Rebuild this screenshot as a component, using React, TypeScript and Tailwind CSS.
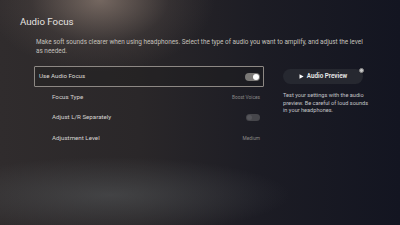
import React from "react";

function Toggle({ on }: { on: boolean }) {
  return on ? (
    <div className="w-[15px] h-[8px] rounded-full bg-[#7a7876] flex items-center justify-end pr-[1px]">
      <div className="w-[6px] h-[6px] rounded-full bg-white" />
    </div>
  ) : (
    <div className="w-[14px] h-[7px] rounded-full bg-[#46464b] flex items-center pl-[1px]">
      <div className="w-[5px] h-[5px] rounded-full bg-[#55555a]" />
    </div>
  );
}

export default function App() {
  return (
    <div
      className="relative w-[400px] h-[225px] overflow-hidden bg-[linear-gradient(90deg,#302c2d_0%,#2a2729_35%,#1c1c24_65%,#131521_100%)]"
      style={{ fontFamily: "Roboto, 'Noto Sans', sans-serif" }}
    >
      <div className="absolute inset-0 bg-[radial-gradient(ellipse_115px_72px_at_100px_0px,rgba(165,145,132,0.6),rgba(120,105,98,0.18)_60%,transparent_100%)]" />
      <div className="absolute inset-0 bg-[radial-gradient(ellipse_180px_38px_at_110px_195px,rgba(95,100,102,0.45),transparent_100%)]" />
      <div className="relative flex flex-col pl-[20px] pt-[15px]">
        <div className="text-[9.7px] leading-[14px] text-[#e6e3e0]">Audio Focus</div>
        <div className="ml-[16px] mt-[9px] w-[334px] text-[6.4px] leading-[9px] text-[#c4c0bc]">
          Make soft sounds clearer when using headphones. Select the type of audio you want to amplify, and adjust the level as needed.
        </div>
        <div className="flex mt-[10px] ml-[14px]">
          <div className="w-[230px] flex flex-col">
            <div className="h-[21px] border border-[#8d8884] rounded-[1px] flex items-center justify-between pl-[4px] pr-[3px] bg-[rgba(30,28,30,0.35)]">
              <span className="text-[6.2px] text-[#dedbd8]">Use Audio Focus</span>
              <Toggle on />
            </div>
            <div className="h-[20.5px] flex items-center justify-between pl-[18px] pr-[4px]">
              <span className="text-[6.2px] text-[#d6d3d0]">Focus Type</span>
              <span className="text-[4.8px] text-[#8a8888]">Boost Voices</span>
            </div>
            <div className="h-[20.5px] flex items-center justify-between pl-[18px] pr-[4px]">
              <span className="text-[6.2px] text-[#d6d3d0]">Adjust L/R Separately</span>
              <Toggle on={false} />
            </div>
            <div className="h-[20.5px] flex items-center justify-between pl-[18px] pr-[4px]">
              <span className="text-[6.2px] text-[#d6d3d0]">Adjustment Level</span>
              <span className="text-[4.8px] text-[#8a8888]">Medium</span>
            </div>
          </div>
          <div className="ml-[19px] flex flex-col pt-[3px]">
            <div className="relative w-[80px] h-[15px] rounded-full bg-[#262830] flex items-center justify-center gap-[3px]">
              <svg width="5" height="5" viewBox="0 0 5 5">
                <path d="M0.5 0.3 L4.6 2.5 L0.5 4.7 Z" fill="#ffffff" />
              </svg>
              <span className="text-[6.3px] font-semibold text-[#ececec]">Audio Preview</span>
              <div className="absolute right-[-1px] top-[-1px] w-[5px] h-[5px] rounded-full bg-[#c8c8c8] border border-[#888]" />
            </div>
            <div className="mt-[8px] w-[86px] text-[5.6px] leading-[7.5px] text-[#c4c4c8]">
              Test your settings with the audio preview. Be careful of loud sounds in your headphones.
            </div>
          </div>
        </div>
      </div>
    </div>
  );
}
